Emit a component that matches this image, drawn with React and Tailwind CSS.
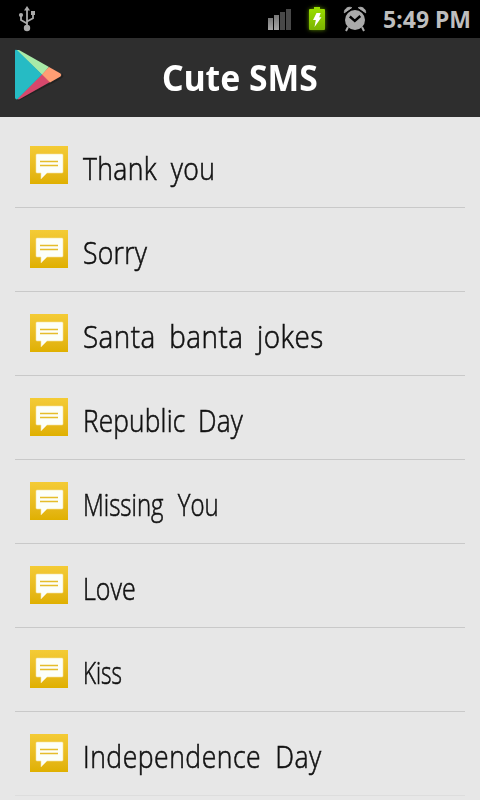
const categories = [
  { label: "Thank you", text: "scale-x-[0.83] tracking-[0.4px] [word-spacing:8px]" },
  { label: "Sorry", text: "scale-x-[0.83] tracking-[0.3px]" },
  { label: "Santa banta jokes", text: "scale-x-[0.87] tracking-[0.5px] [word-spacing:7px]" },
  { label: "Republic Day", text: "scale-x-[0.82] tracking-[0.2px] [word-spacing:7px]" },
  { label: "Missing You", text: "scale-x-[0.75] [word-spacing:10.6px]" },
  { label: "Love", text: "scale-x-[0.78]" },
  { label: "Kiss", text: "scale-x-[0.7]" },
  { label: "Independence Day", text: "scale-x-[0.83] tracking-[0.6px] [word-spacing:8px]" },
];

function UsbIcon() {
  return (
    <svg className="h-[26px] w-[18px]" viewBox="0 0 18 26" fill="none" stroke="#aaaaaa" strokeWidth="1.8">
      <path d="M9 4v18M9 17.5L3 14V9M9 15.5l6-3.3V8" />
      <path d="M9 0l3 4.5H6z" fill="#aaaaaa" stroke="none" />
      <circle cx="9" cy="22" r="3.2" fill="#aaaaaa" stroke="none" />
      <circle cx="3" cy="9" r="2.1" fill="#aaaaaa" stroke="none" />
      <path d="M13 5h4v4h-4z" fill="#aaaaaa" stroke="none" />
    </svg>
  );
}

function SignalIcon() {
  return (
    <svg className="h-[22px] w-[24px]" viewBox="0 0 24 22">
      <defs>
        <linearGradient id="bar" x1="0" y1="0" x2="0" y2="1">
          <stop offset="0" stopColor="#787878" />
          <stop offset="1" stopColor="#a6a6a6" />
        </linearGradient>
      </defs>
      <path d="M0 10h5v12H0z" fill="url(#bar)" />
      <path d="M6 7h5v15H6z" fill="url(#bar)" />
      <path d="M12 4h5v18h-5zM18 1h5v21h-5z" fill="#484848" />
    </svg>
  );
}

function BatteryIcon() {
  return (
    <svg className="h-[28px] w-[24px] drop-shadow-[0_0_2px_#5c8a00]" viewBox="0 0 24 28">
      <defs>
        <linearGradient id="charge" x1="0" y1="0" x2="0" y2="1">
          <stop offset="0" stopColor="#9be000" />
          <stop offset="1" stopColor="#7bb400" />
        </linearGradient>
      </defs>
      <path d="M9 2h6v2h4q1 0 1 1v19q0 1-1 1H5q-1 0-1-1V5q0-1 1-1h4z" fill="url(#charge)" />
      <path d="M11.500 8h4.200l-1.500 4.200h2.300L9.500 22l1.300-7H8z" fill="#ffffff" />
    </svg>
  );
}

function AlarmIcon() {
  return (
    <svg className="h-[26px] w-[24px]" viewBox="0 0 24 26" fill="#aaaaaa">
      <circle cx="12" cy="14" r="10" />
      <path d="M1.300 6.800A5.300 5.300 0 0 1 8.700 1.700zM22.700 6.800a5.300 5.300 0 0 0-7.400-5.100z" stroke="#aaaaaa" strokeLinejoin="round" />
      <path d="M5 21l-2 4M19 21l2 4" stroke="#aaaaaa" strokeWidth="2" />
      <path d="M6.800 10.500l5 4.500 5.500-5" fill="none" stroke="#000000" strokeWidth="2.4" />
    </svg>
  );
}

function PlayLogo() {
  return (
    <svg className="h-[54px] w-[50px]" viewBox="0 0 50 54">
      <path d="M2 52L34 35l12-7q2-1 1-3l1 2q1 2-1 3L36 36 4 52.500z" fill="#222222" />
      <path d="M1 2h3l30 17-7 8z" fill="#a8eaa8" />
      <path d="M2 51l25-25 8 8L4 51.500z" fill="#d6486c" />
      <path d="M27 26.500l7-7.500L45.500 25.500q1.500 1.500 0 3L35 34.500z" fill="#ff9e74" />
      <path d="M0 3q0-2 2-1l25 24.500L2 51.500q-2 0-2-2z" fill="#26bbc4" />
    </svg>
  );
}

function MessageIcon() {
  return (
    <div className="flex h-[38px] w-[38px] shrink-0 bg-gradient-to-b from-[#f4cb35] to-[#e0b000]">
      <svg className="h-full w-full" viewBox="0 0 38 38">
        <path d="M7 8h25q1 0 1 1v17q0 1-1 1H17l-6 6v-6H7q-1 0-1-1V9q0-1 1-1z" fill="#fcfff9" stroke="#f7e39a" strokeWidth="0.6" />
        <path d="M10 15.500h18M10 19.500h18" stroke="#e5bd2b" strokeWidth="1.5" />
      </svg>
    </div>
  );
}

export default function App() {
  return (
    <div className="flex h-[800px] w-[480px] flex-col overflow-hidden bg-[#e7e7e7]">
      <div className="flex h-[38px] shrink-0 items-center bg-black pl-[18px] pr-[9px]">
        <UsbIcon />
        <div className="ml-auto flex items-center">
          <SignalIcon />
          <div className="ml-[13px]"><BatteryIcon /></div>
          <div className="ml-[14px]"><AlarmIcon /></div>
          <span className="ml-[16px] whitespace-nowrap font-['Noto_Sans','Open_Sans',sans-serif] text-[23px] font-bold leading-[38px] text-[#bebebe]">
            5:49 PM
          </span>
        </div>
      </div>

      <header className="grid h-[79px] shrink-0 grid-cols-[66px_1fr_66px] items-center bg-[#2e2e2e]">
        <div className="pb-[5px] pl-[15px]"><PlayLogo /></div>
        <h1 className="scale-x-[0.935] text-center font-['Noto_Sans','Open_Sans',sans-serif] text-[36px] font-bold leading-[38px] text-white">
          Cute SMS
        </h1>
      </header>

      <ul className="px-[15px] pt-[7px]">
        {categories.map(({ label, text }) => (
          <li key={label} className="flex h-[84px] items-start gap-[15px] border-b border-[#c9c9c9] pl-[15px] pt-[22px] last:border-[#dddddd]">
            <MessageIcon />
            <span className={`origin-left whitespace-nowrap font-['Open_Sans',sans-serif] text-[32px] font-light leading-[44px] text-[#111111] [-webkit-text-stroke:0.6px_#111111] ${text}`}>
              {label}
            </span>
          </li>
        ))}
      </ul>
    </div>
  );
}
